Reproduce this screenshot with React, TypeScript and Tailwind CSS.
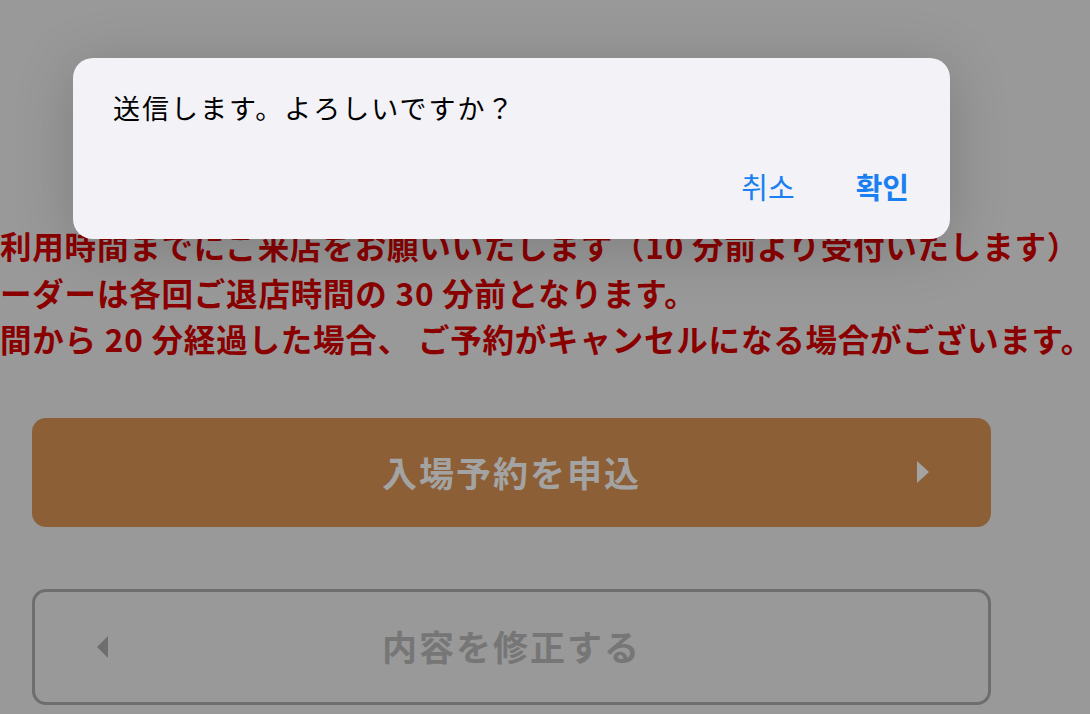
import React from 'react';

const jp = { fontFamily: '"Noto Sans CJK JP", "Noto Sans", sans-serif' };
const kr = { fontFamily: '"Noto Sans CJK KR", "Noto Sans", sans-serif' };

const notes = [
  '利用時間までにご来店をお願いいたします（10 分前より受付いたします）',
  'ーダーは各回ご退店時間の 30 分前となります。',
  '間から 20 分経過した場合、 ご予約がキャンセルになる場合がございます。',
];

const App: React.FC = () => {
  return (
    <div className="relative w-[1090px] h-[714px] overflow-hidden bg-[#999999]" style={jp}>
      {/* Page content (dimmed) */}
      <div className="pt-[222px]">
        <div className="text-[31.5px] leading-[46.5px] font-bold tracking-[0.8px] text-[#8a0000] whitespace-nowrap">
          {notes.map((line, i) => (
            <p key={i}>{line}</p>
          ))}
        </div>

        <div className="px-8 mt-[56px]">
          <button className="relative w-[959px] h-[109px] rounded-[14px] bg-[#8c5f37] flex items-center justify-center">
            <span className="text-[35px] font-bold tracking-[2px] text-[#a3a3a3]">入場予約を申込</span>
            <span className="absolute right-[62px] top-1/2 -translate-y-1/2 w-0 h-0 border-y-[11px] border-y-transparent border-l-[12px] border-l-[#a3a3a3]"></span>
          </button>

          <button className="relative mt-[62px] w-[959px] h-[116px] rounded-[14px] border-[3px] border-[#6e6e6e] flex items-center justify-center">
            <span className="text-[35px] font-bold tracking-[2px] text-[#767676]">内容を修正する</span>
            <span className="absolute left-[62px] top-1/2 -translate-y-1/2 w-0 h-0 border-y-[11px] border-y-transparent border-r-[11px] border-r-[#6e6e6e]"></span>
          </button>
        </div>
      </div>

      {/* Alert dialog */}
      <div className="absolute left-[73px] top-[58px] w-[877px] h-[181px] rounded-[20px] bg-[#f2f2f7] shadow-[0_8px_60px_rgba(0,0,0,0.18)] px-10 pt-[33px]">
        <p className="text-[27px] leading-[34px] text-black tracking-[2px]">送信します。よろしいですか？</p>
        <div className="flex justify-end gap-[61px] mt-[44px] pr-[1px] text-[29px] leading-[34px] text-[#1a80f2]" style={kr}>
          <span>취소</span>
          <span className="font-semibold">확인</span>
        </div>
      </div>
    </div>
  );
};

export default App;
